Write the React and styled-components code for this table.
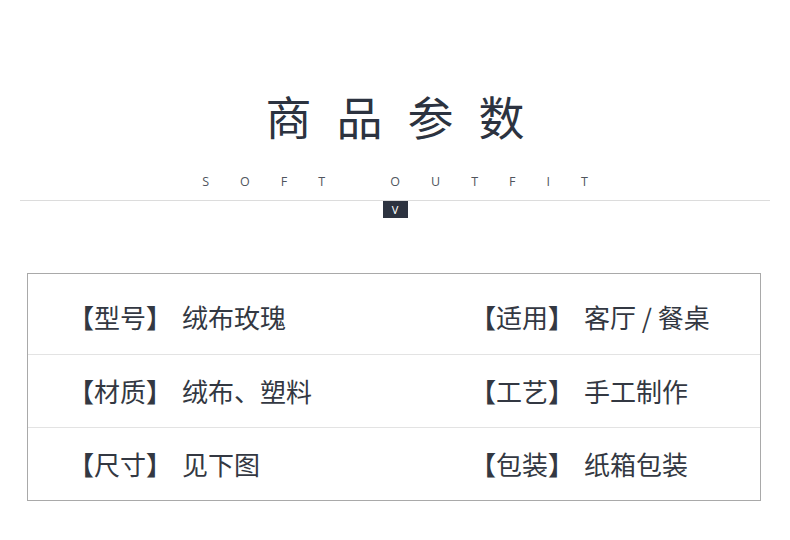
import React from "react";
import styled, { createGlobalStyle } from "styled-components";

const GlobalStyle = createGlobalStyle`
  body {
    margin: 0;
    background: #ffffff;
    font-family: "Noto Sans CJK SC", "Noto Sans", sans-serif;
  }
`;

const Page = styled.div`
  width: 790px;
  height: 540px;
  background: #fff;
  overflow: hidden;
`;

const Header = styled.div`
  display: flex;
  flex-direction: column;
  align-items: center;
  padding-top: 92px;
`;

const Title = styled.h1`
  margin: 0;
  font-size: 46px;
  line-height: 46px;
  font-weight: 400;
  color: #2c3340;
  letter-spacing: 25px;
  padding-left: 25px;
`;

const Subtitle = styled.div`
  margin-top: 37px;
  font-family: "Open Sans", "Noto Sans", sans-serif;
  font-size: 12.5px;
  line-height: 13px;
  font-weight: 400;
  color: #50555e;
  letter-spacing: 31px;
  padding-left: 31px;
  white-space: pre;
`;

const Divider = styled.div`
  margin: 12px 20px 0;
  height: 1px;
  background: #dcdcdc;
  display: flex;
  justify-content: center;
`;

const Badge = styled.div`
  margin-top: 1px;
  width: 25px;
  height: 17px;
  background: #2d3340;
  color: #fff;
  font-family: "Noto Sans", sans-serif;
  font-size: 11px;
  line-height: 17px;
  text-align: center;
`;

const Table = styled.div`
  margin: 72px 0 0 27px;
  width: 732px;
  border: 1px solid #a9a9a9;
`;

const Row = styled.div`
  display: grid;
  grid-template-columns: 402px 1fr;
  height: ${(p) => (p.$first ? 80 : 73)}px;
  padding-top: ${(p) => (p.$first ? 6 : 0)}px;
  box-sizing: border-box;
  border-top: ${(p) => (p.$first ? "none" : "1px solid #e3e3e3")};
  align-items: center;
`;

const Cell = styled.div`
  display: flex;
  align-items: center;
  padding-left: 40px;
  font-size: 26px;
  line-height: 30px;
  color: #333842;
`;

const Label = styled.span`
  width: 104px;
  margin-right: 10px;
  white-space: nowrap;
`;

const Bracket = styled.span`
  font-weight: 700;
`;

const rows = [
  [
    ["型号", "绒布玫瑰"],
    ["适用", "客厅 / 餐桌"],
  ],
  [
    ["材质", "绒布、塑料"],
    ["工艺", "手工制作"],
  ],
  [
    ["尺寸", "见下图"],
    ["包装", "纸箱包装"],
  ],
];

const App = () => {
  return (
    <Page>
      <GlobalStyle />
      <Header>
        <Title>商品参数</Title>
        <Subtitle>{"SOFT OUTFIT"}</Subtitle>
      </Header>
      <Divider>
        <Badge>V</Badge>
      </Divider>
      <Table>
        {rows.map((row, i) => (
          <Row key={i} $first={i === 0}>
            {row.map(([k, v]) => (
              <Cell key={k}>
                <Label>
                  <Bracket>【</Bracket>
                  {k}
                  <Bracket>】</Bracket>
                </Label>
                <span>{v}</span>
              </Cell>
            ))}
          </Row>
        ))}
      </Table>
    </Page>
  );
};

export default App;
